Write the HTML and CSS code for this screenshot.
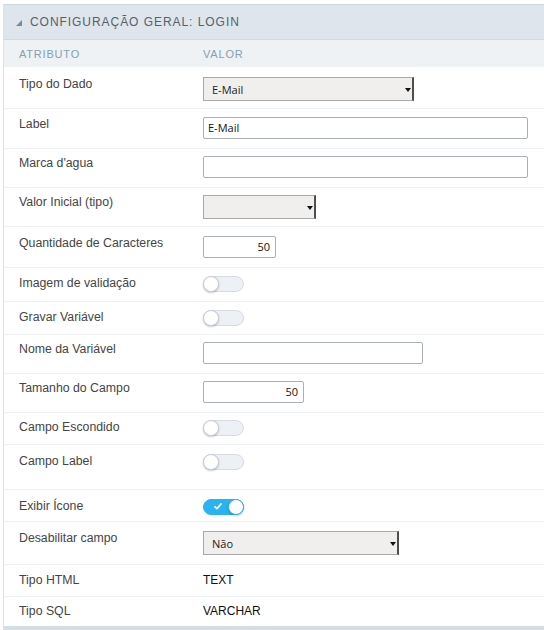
FILE: index.html
```html
<!DOCTYPE html>
<html lang="pt">
<head>
<meta charset="utf-8">
<title>Configuração Geral: Login</title>
<link rel="stylesheet" href="styles.css">
</head>
<body>
<div class="panel">
  <div class="panel-header"><span class="caret"></span><span class="title">CONFIGURAÇÃO GERAL: LOGIN</span></div>
  <div class="col-head"><div class="c-attr">ATRIBUTO</div><div class="c-val">VALOR</div></div>

  <div class="row r-tipo">
    <div class="attr">Tipo do Dado</div>
    <div class="val"><div class="select w-211"><span class="sel-text">E-Mail</span><span class="sel-arrow"></span></div></div>
  </div>
  <div class="row r-label">
    <div class="attr">Label</div>
    <div class="val"><div class="input w-325">E-Mail</div></div>
  </div>
  <div class="row r-input">
    <div class="attr">Marca d'agua</div>
    <div class="val"><div class="input w-325"></div></div>
  </div>
  <div class="row r-valor">
    <div class="attr">Valor Inicial (tipo)</div>
    <div class="val"><div class="select w-113"><span class="sel-text"></span><span class="sel-arrow"></span></div></div>
  </div>
  <div class="row r-qtd">
    <div class="attr">Quantidade de Caracteres</div>
    <div class="val"><div class="input num w-73">50</div></div>
  </div>
  <div class="row r-img">
    <div class="attr">Imagem de validação</div>
    <div class="val"><div class="toggle"><span class="knob"></span></div></div>
  </div>
  <div class="row r-toggle">
    <div class="attr">Gravar Variável</div>
    <div class="val"><div class="toggle"><span class="knob"></span></div></div>
  </div>
  <div class="row r-input">
    <div class="attr">Nome da Variável</div>
    <div class="val"><div class="input w-220"></div></div>
  </div>
  <div class="row r-input">
    <div class="attr">Tamanho do Campo</div>
    <div class="val"><div class="input num w-101">50</div></div>
  </div>
  <div class="row r-esc">
    <div class="attr">Campo Escondido</div>
    <div class="val"><div class="toggle"><span class="knob"></span></div></div>
  </div>
  <div class="row r-tall">
    <div class="attr">Campo Label</div>
    <div class="val"><div class="toggle"><span class="knob"></span></div></div>
  </div>
  <div class="row r-icon">
    <div class="attr">Exibir Ícone</div>
    <div class="val"><div class="toggle on"><svg class="check" width="8" height="7" viewBox="0 0 8 7"><path d="M1 3.8 L3 5.6 L7 1" fill="none" stroke="#fff" stroke-width="1.8" stroke-linecap="round" stroke-linejoin="round"/></svg><span class="knob"></span></div></div>
  </div>
  <div class="row r-des">
    <div class="attr">Desabilitar campo</div>
    <div class="val"><div class="select w-196"><span class="sel-text">Não</span><span class="sel-arrow"></span></div></div>
  </div>
  <div class="row r-text">
    <div class="attr">Tipo HTML</div>
    <div class="val text">TEXT</div>
  </div>
  <div class="row r-last">
    <div class="attr">Tipo SQL</div>
    <div class="val text">VARCHAR</div>
  </div>
</div>
</body>
</html>
```

FILE: styles.css
```css
html, body {
  margin: 0;
  padding: 0;
  background: #ffffff;
}
body {
  padding: 4px 0 0 3px;
  font-family: "Liberation Sans", Arial, sans-serif;
  overflow: hidden;
}
.panel {
  width: 545px;
  border-left: 1px solid #dde2e7;
  border-bottom: 6px solid #d6dee5;
}
.panel-header {
  height: 34px;
  border-top: 1px solid #cfd8dd;
  border-bottom: 1px solid #d0dae0;
  background: #dfe5ec;
  display: flex;
  align-items: center;
  padding-left: 12px;
}
.caret {
  width: 0;
  height: 0;
  border-style: solid;
  border-width: 0 0 6px 6px;
  border-color: transparent transparent #7d8a94 transparent;
  margin: 1px 8px 0 0;
}
.title {
  font-size: 12px;
  letter-spacing: 0.95px;
  color: #55616b;
}
.col-head {
  height: 27px;
  background: #eef2f5;
  display: grid;
  grid-template-columns: 199px 1fr;
  align-items: center;
  font-size: 11px;
  letter-spacing: 0.8px;
  color: #86a0ae;
}
.c-attr { padding-left: 15px; }
.row {
  display: grid;
  grid-template-columns: 199px 1fr;
  align-items: start;
  padding: 8px 0;
  border-bottom: 1px solid #eef0f3;
}
.r-tipo   { padding: 10px 0 7px; }
.r-label  { padding: 8px 0 9px; }
.r-input  { padding: 7px 0 9px; }
.r-valor  { padding: 7px 0 7px; }
.r-qtd    { padding: 9px 0 9px; }
.r-img    { padding: 8px 0 9px; }
.r-toggle { padding: 8px 0 8px; }
.r-esc    { padding: 7px 0 8px; }
.r-tall   { padding: 9px 0 19px; }
.r-icon   { padding: 9px 0 6px; }
.r-des    { padding: 9px 0 9px; }
.r-text   { padding: 8px 0 8px; }
.r-last   { padding: 7px 0 7px; border-bottom: none; }
.attr {
  padding-left: 15px;
  font-size: 12.3px;
  line-height: 15px;
  color: #454545;
  white-space: nowrap;
}
.val.text {
  font-size: 12px;
  line-height: 15px;
  color: #111;
}
.select {
  height: 24px;
  box-sizing: border-box;
  background: #f0efed;
  border: 1px solid #a9a9a9;
  border-right: 2px solid #4d4d4d;
  display: flex;
  align-items: center;
  justify-content: space-between;
  padding: 0 1px 0 8px;
  font-family: "Open Sans", "DejaVu Sans", sans-serif;
  font-size: 11px;
  color: #1a1a1a;
}
.sel-arrow {
  width: 0;
  height: 0;
  border-style: solid;
  border-width: 4px 3px 0 3px;
  border-color: #111 transparent transparent transparent;
  margin-top: 1px;
}
.input {
  height: 22px;
  box-sizing: border-box;
  border: 1px solid #aab0b7;
  border-radius: 2px;
  background: #fff;
  padding: 0 4px;
  font-family: "Open Sans", "DejaVu Sans", sans-serif;
  font-size: 11px;
  line-height: 20px;
  color: #111;
}
.input.num { text-align: right; padding-right: 5px; }
.w-211 { width: 211px; }
.w-113 { width: 113px; }
.w-196 { width: 196px; }
.w-325 { width: 325px; }
.w-220 { width: 220px; }
.w-73 { width: 73px; }
.w-101 { width: 101px; }
.toggle {
  width: 41px;
  height: 16px;
  box-sizing: border-box;
  border: 1px solid #d6dce1;
  border-radius: 8px;
  background: #edf0f4;
  display: flex;
  align-items: center;
}
.knob {
  width: 16px;
  height: 16px;
  box-sizing: border-box;
  border-radius: 50%;
  background: #fff;
  border: 1px solid #c9ced3;
  box-shadow: 0 1px 2px rgba(0,0,0,0.22);
  margin-left: -1px;
}
.toggle.on {
  background: #29b3f0;
  border-color: #29b3f0;
  justify-content: space-between;
}
.toggle.on .knob {
  margin-left: 0;
  margin-right: -1px;
  border-color: #29b3f0;
}
.check { margin-left: 10px; margin-bottom: 2px; }
```
